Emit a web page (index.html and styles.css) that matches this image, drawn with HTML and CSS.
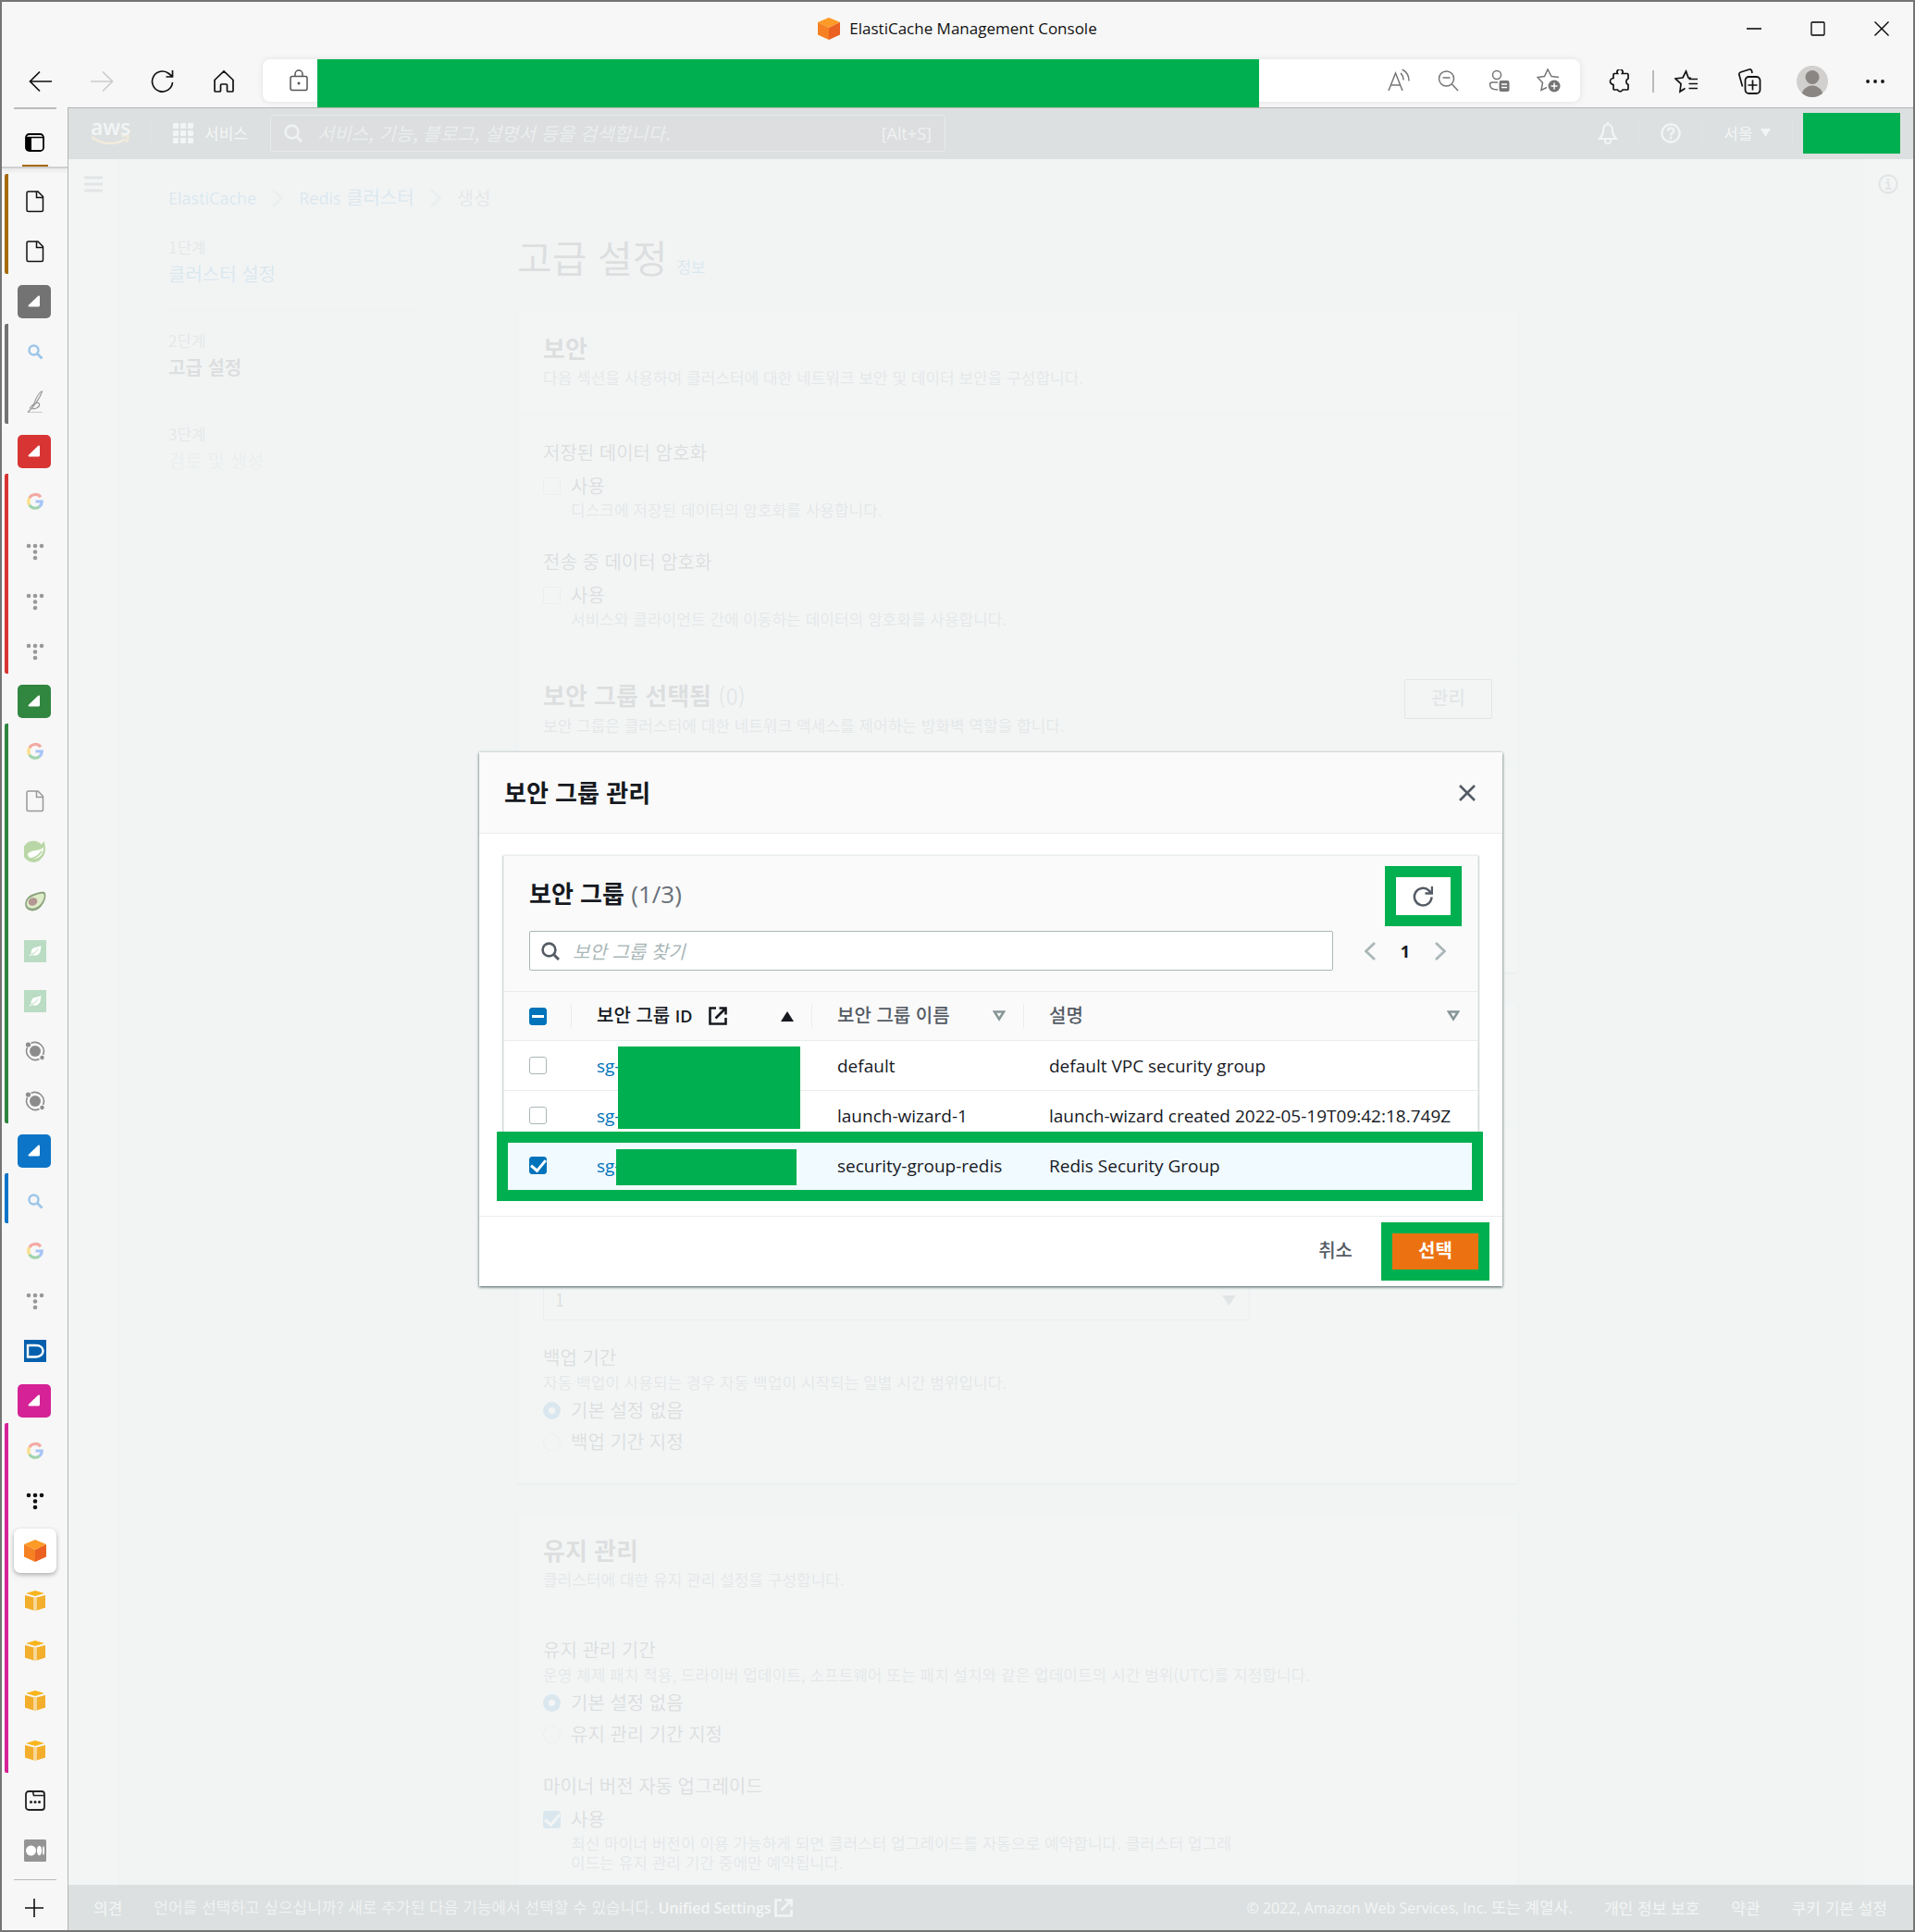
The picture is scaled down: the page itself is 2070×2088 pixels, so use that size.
FILE: index.html
```html
<!DOCTYPE html>
<html lang="ko">
<head>
<meta charset="utf-8">
<title>ElastiCache Management Console</title>
<link rel="stylesheet" href="styles.css">
</head>
<body>
<svg class="sprite" aria-hidden="true">
  <symbol id="i-file" viewBox="0 0 24 24"><path d="M4.500 1h10.500l5.500 5.500v14.500a1.500 1.500 0 0 1-1.500 1.500H4.500A1.500 1.500 0 0 1 3 21V2.500A1.500 1.500 0 0 1 4.500 1zM13.500 1v6.500h7" fill="none" stroke="currentColor" stroke-width="1.500"/></symbol>
  <symbol id="i-group" viewBox="0 0 36 36"><path d="M24 12.500v9.500a1.500 1.500 0 0 1-1.500 1.500H12.500c-1 0-1.300-1-.6-1.700l10.400-10c.8-.7 1.700-.4 1.700.7z" fill="#fff"/></symbol>
  <symbol id="i-find" viewBox="0 0 24 24"><circle cx="10.500" cy="10.500" r="5" fill="none" stroke="#9cc5ea" stroke-width="2.400"/><path d="M14.500 14.500l5 5" stroke="#9cc5ea" stroke-width="2.800"/></symbol>
  <symbol id="i-feather" viewBox="0 0 24 24"><path d="M4 24h15.500M4 23.500C9 19 17 9 19.500 1c-4 0-8.500 12-11 19M6 19.500c3-5 9.500-8 10.500-5s-5 7-8.500 4.500" fill="none" stroke="#999" stroke-width="1.200"/></symbol>
  <symbol id="i-google" viewBox="0 0 24 24"><g fill="none" stroke-width="3.200"><path d="M18 7.300A7.300 7.300 0 0 0 5.800 8.300" stroke="#f3aaa4"/><path d="M5.800 8.300a7.300 7.300 0 0 0 0 7.400" stroke="#fbdf8b"/><path d="M5.800 15.700a7.300 7.300 0 0 0 11 1.800" stroke="#a0d4ae"/><path d="M16.800 17.500a7.300 7.300 0 0 0 2.500-5.500H12.500" stroke="#a6c4f8"/></g></symbol>
  <symbol id="i-tdots" viewBox="0 0 24 24"><g fill="currentColor"><circle cx="5" cy="6" r="2.300"/><circle cx="12" cy="6" r="2.300"/><circle cx="19" cy="6" r="2.300"/><circle cx="12" cy="12.500" r="2.300"/><circle cx="12" cy="19" r="2.300"/></g></symbol>
  <symbol id="i-spring" viewBox="0 0 24 24"><path d="M21.500 1c2 6 2.500 13-2 18a11.500 11.500 0 1 1-1-14.500c1.200-1 2.200-2 3-3.500z" fill="#b9d7a6"/><path d="M4 16c1 4 6 5 10 3.500 5-2 7-7 7-12-3 4-9 3-12.500 4.500C5 13.500 3.500 14.500 4 16z" fill="#fff"/><path d="M5 20c6 0 11-3 14-8" fill="none" stroke="#b9d7a6" stroke-width="1.600"/></symbol>
  <symbol id="i-avocado" viewBox="0 0 24 24"><path d="M3 20C-1 15 2 8 8 5c5-2 11-4 14-3 3 3 1 10-3 15-4 6-12 7-16 3z" fill="#8da37f"/><path d="M4 18c-3-4 0-9 5-11 4-2 10-4 12-3 2 2 0 7-3 11-4 5-11 6-14 3z" fill="#deecc9"/><ellipse cx="9.500" cy="12.500" rx="5" ry="4.200" transform="rotate(-25 9.500 12.500)" fill="#b39792"/></symbol>
  <symbol id="i-leaf" viewBox="0 0 24 24"><path d="M0 0h24v24H0z" fill="#b9dcc2"/><path d="M18.500 6c-3 2-8 1-10 4-1.500 2.500-.5 4-1 5-.5 1-1 1.500-2.500 2 2 .5 3-.5 3.500-1 4 1.500 7 .5 8.500-2.500 1.300-2.600 1-5 1.500-7.500z" fill="#fff"/><path d="M8 15.500c3-1 5.500-3 7.500-6" fill="none" stroke="#b9dcc2"/></symbol>
  <symbol id="i-orbit" viewBox="0 0 24 24"><circle cx="12" cy="12" r="6" fill="#8c8c8c"/><path d="M7.500 3.500a9.600 9.600 0 0 1 13 12.500M16.500 20.500A9.600 9.600 0 0 1 3.500 8" fill="none" stroke="#8c8c8c" stroke-width="1.600"/><circle cx="4.500" cy="5" r="2.600" fill="#8c8c8c"/><circle cx="19.500" cy="19" r="2.200" fill="#8c8c8c"/></symbol>
  <symbol id="i-d" viewBox="0 0 24 24"><path d="M0 0h24v24H0z" fill="#0460ad"/><path d="M4 6h9c5 0 7.500 3 7.500 6s-2.500 6.500-7.500 6.500H4z" fill="none" stroke="#fff" stroke-width="2.400"/></symbol>
  <symbol id="i-cube" viewBox="0 0 24 24"><path d="M12 0l12 5-12 6L0 5z" fill="#fd9a28"/><path d="M0 5l12 6v13L0 18.500z" fill="#f58122"/><path d="M24 5l-12 6v13l12-5.500z" fill="#ea6121"/></symbol>
  <symbol id="i-box" viewBox="0 0 24 24"><path d="M12 1l10 3-10 3L2 4z" fill="#f8b51c"/><path d="M1 6l9.500 2.500v14L1 19.500zM23 6l-9.500 2.500v14l9.500-3z" fill="#f3ae2b"/><path d="M12 8v15" stroke="#f9d998" stroke-width="2"/></symbol>
  <symbol id="i-window" viewBox="0 0 24 24"><rect x="2" y="2" width="20" height="20" rx="3" fill="none" stroke="#222" stroke-width="1.800"/><path d="M9.500 2l1 4.500H22" fill="none" stroke="#222" stroke-width="1.600"/><g fill="#222"><circle cx="7.500" cy="13.500" r="1.500"/><circle cx="12" cy="13.500" r="1.500"/><circle cx="16.500" cy="13.500" r="1.500"/></g></symbol>
  <symbol id="i-medium" viewBox="0 0 24 24"><rect width="24" height="24" rx="1.500" fill="#949494"/><g fill="#fff"><circle cx="7.500" cy="12" r="5.500"/><ellipse cx="16.500" cy="12" rx="2.600" ry="5.300"/><ellipse cx="21" cy="12" rx="1" ry="4.700"/></g></symbol>
  <symbol id="i-search" viewBox="0 0 20 20"><circle cx="8.500" cy="8.500" r="6.900" fill="none" stroke="currentColor" stroke-width="2.600"/><path d="M13 13l6 6" stroke="currentColor" stroke-width="3"/></symbol>
  <symbol id="i-external" viewBox="0 0 20 20"><path d="M8 1.500H1.500v17h17V12M11.500 1.500h7v7M18 2L7.500 12.500" fill="none" stroke="currentColor" stroke-width="2.600"/></symbol>
  <symbol id="i-sort" viewBox="0 0 14 12"><path d="M2 1.500h10L7 9.500z" fill="none" stroke="#879596" stroke-width="2.500"/></symbol>
  <symbol id="i-next" viewBox="0 0 12 20"><path d="M1 1l9.500 9L1 19" fill="none" stroke="currentColor" stroke-width="2.800"/></symbol>
</svg>

<div class="browser">
  <header class="chrome">
    <div class="titlebar">
      <div class="page-title"><svg width="24" height="24"><use href="#i-cube"/></svg><span>ElastiCache Management Console</span></div>
      <div class="window-buttons">
        <button aria-label="최소화"><svg width="16" height="16"><path d="M0 8h16" stroke="#000" stroke-width="1.500"/></svg></button>
        <button aria-label="최대화"><svg width="16" height="16"><rect x="1" y="1" width="14" height="14" rx="1" fill="none" stroke="#000" stroke-width="1.300"/></svg></button>
        <button aria-label="닫기"><svg width="16" height="16"><path d="M.5.5l15 15M15.500.5l-15 15" stroke="#000" stroke-width="1.300"/></svg></button>
      </div>
    </div>
    <div class="toolbar">
      <div class="nav-buttons">
        <button aria-label="뒤로"><svg width="26" height="24" viewBox="0 0 26 24"><path d="M25 12H2M12 1.500L1.500 12 12 22.500" fill="none" stroke="#111" stroke-width="1.700"/></svg></button>
        <button aria-label="앞으로" disabled><svg width="26" height="24" viewBox="0 0 26 24"><path d="M1 12h23M14 1.500L24.500 12 14 22.500" fill="none" stroke="#ccc" stroke-width="1.700"/></svg></button>
        <button aria-label="새로 고침"><svg width="26" height="26" viewBox="0 0 26 26"><path d="M23.500 14A11 11 0 1 1 19.500 4.500L23 7.500M23.500 1v7h-7" fill="none" stroke="#111" stroke-width="1.700"/></svg></button>
        <button aria-label="홈"><svg width="24" height="26" viewBox="0 0 24 26"><path d="M2 11.500L12 2l10 9.500V23a1 1 0 0 1-1 1h-4.500a1 1 0 0 1-1-1v-6a1 1 0 0 0-1-1h-5a1 1 0 0 0-1 1v6a1 1 0 0 1-1 1H3a1 1 0 0 1-1-1z" fill="none" stroke="#111" stroke-width="1.700"/></svg></button>
      </div>
      <div class="address">
        <button class="lock" aria-label="사이트 정보"><svg width="20" height="24" viewBox="0 0 20 24"><rect x="1" y="7.500" width="18" height="15" rx="2" fill="none" stroke="#555" stroke-width="1.500"/><path d="M6 7.500V5a4 4 0 0 1 8 0v2.500" fill="none" stroke="#555" stroke-width="1.500"/><circle cx="10" cy="15" r="1.500" fill="#555"/></svg></button>
        <div class="mask mask-url"></div>
        <div class="address-tools">
          <button aria-label="소리내어 읽기"><svg width="24" height="24" viewBox="0 0 24 24"><path d="M1 23L8.500 4 16 23M3.500 17h10M14 4c2 2 3 4.500 3 7.500M15.500 0C20 2 23 7 23 12.500" fill="none" stroke="#757575" stroke-width="1.500"/></svg></button>
          <button aria-label="축소"><svg width="24" height="24" viewBox="0 0 24 24"><circle cx="9.500" cy="10" r="8" fill="none" stroke="#757575" stroke-width="1.500"/><path d="M5.500 9h8M15.500 16l6.500 7" fill="none" stroke="#757575" stroke-width="1.500"/></svg></button>
          <button aria-label="로그인 정보"><svg width="24" height="24" viewBox="0 0 24 24"><circle cx="10" cy="6" r="4.500" fill="none" stroke="#757575" stroke-width="1.500"/><path d="M11 14H5a2.500 2.500 0 0 0-2.500 2.500C2.500 20 6 22 11 22" fill="none" stroke="#757575" stroke-width="1.500"/><rect x="12.500" y="12" width="11" height="12" rx="2" fill="#757575"/><path d="M15 16h6M15 19.500h6" stroke="#fff" stroke-width="1.300"/></svg></button>
          <button aria-label="즐겨찾기에 추가"><svg width="26" height="26" viewBox="0 0 26 26"><path d="M24 9.500l-8-1L12 1 8.500 8.500 1 9.500l5.500 6L5 23.500l6-3" fill="none" stroke="#757575" stroke-width="1.500"/><circle cx="19" cy="19" r="6.500" fill="#757575"/><path d="M19 15.500v7M15.500 19h7" stroke="#fff" stroke-width="1.500"/></svg></button>
        </div>
      </div>
      <div class="browser-tools">
        <button aria-label="확장"><svg width="24" height="26" viewBox="0 0 24 26"><path d="M6 4.500h3.500a3 3 0 1 1 5 0H20a1 1 0 0 1 1 1V10a3.500 3.500 0 0 0 0 6.500V21a1 1 0 0 1-1 1h-5a3 3 0 0 1-5.500 0H6a1 1 0 0 1-1-1v-4.500a3.500 3.500 0 0 1 0-7v-4a1 1 0 0 1 1-1z" fill="none" stroke="#111" stroke-width="1.700"/></svg></button>
        <span class="tool-rule"></span>
        <button aria-label="즐겨찾기"><svg width="26" height="26" viewBox="0 0 26 26"><path d="M18 9.500l-3-.5L12.500 2 9 9l-8 1 6 5.500L6 24l5.500-3.500M15.500 10.500H25M15.500 15.500H25M15.500 20.500H25" fill="none" stroke="#111" stroke-width="1.700"/></svg></button>
        <button aria-label="컬렉션" class="spaced"><svg width="26" height="28" viewBox="0 0 26 28"><path d="M5.500 19.500L2 7a2.500 2.500 0 0 1 1.500-3L13 1a2 2 0 0 1 2.500 1.500L16 5" fill="none" stroke="#111" stroke-width="1.700"/><rect x="8.500" y="9" width="16" height="18" rx="4" fill="none" stroke="#111" stroke-width="1.800"/><path d="M16.500 12.500v11M11.500 18h10" stroke="#111" stroke-width="1.700"/></svg></button>
        <button aria-label="프로필" class="spaced"><svg width="34" height="34" viewBox="0 0 34 34"><clipPath id="round"><circle cx="17" cy="17" r="17"/></clipPath><g clip-path="url(#round)"><path d="M0 0h34v34H0z" fill="#d2d0ce"/><circle cx="17" cy="12.500" r="7.500" fill="#8a8684"/><circle cx="17" cy="33" r="11.500" fill="#8a8684"/></g></svg></button>
        <button aria-label="설정 및 기타" class="spaced"><svg width="20" height="6"><g fill="#111"><circle cx="2" cy="3" r="1.900"/><circle cx="10" cy="3" r="1.900"/><circle cx="18" cy="3" r="1.900"/></g></svg></button>
      </div>
    </div>
  </header>

  <div class="window-body">
    <nav class="tabs" aria-label="세로 탭">
      <div class="tabs-top"><button aria-label="탭 창"><svg width="22" height="22" viewBox="0 0 22 22"><rect x="1" y="2" width="19" height="18" rx="3.500" fill="none" stroke="#000" stroke-width="1.800"/><path d="M1 5.500h19" stroke="#000" stroke-width="1.500"/><path d="M1 6h6v14H3a2 2 0 0 1-2-2z"/></svg></button></div>
      <div class="tab-group g-brown"><button class="tab dark"><svg><use href="#i-file"/></svg></button><button class="tab dark"><svg><use href="#i-file"/></svg></button></div>
      <button class="tab group-head g-gray"><svg><use href="#i-group"/></svg></button>
      <div class="tab-group g-gray"><button class="tab"><svg><use href="#i-find"/></svg></button><button class="tab"><svg><use href="#i-feather"/></svg></button></div>
      <button class="tab group-head g-red"><svg><use href="#i-group"/></svg></button>
      <div class="tab-group g-red"><button class="tab"><svg><use href="#i-google"/></svg></button><button class="tab"><svg><use href="#i-tdots"/></svg></button><button class="tab"><svg><use href="#i-tdots"/></svg></button><button class="tab"><svg><use href="#i-tdots"/></svg></button></div>
      <button class="tab group-head g-green"><svg><use href="#i-group"/></svg></button>
      <div class="tab-group g-green"><button class="tab"><svg><use href="#i-google"/></svg></button><button class="tab"><svg><use href="#i-file"/></svg></button><button class="tab"><svg><use href="#i-spring"/></svg></button><button class="tab"><svg><use href="#i-avocado"/></svg></button><button class="tab"><svg><use href="#i-leaf"/></svg></button><button class="tab"><svg><use href="#i-leaf"/></svg></button><button class="tab"><svg><use href="#i-orbit"/></svg></button><button class="tab"><svg><use href="#i-orbit"/></svg></button></div>
      <button class="tab group-head g-blue"><svg><use href="#i-group"/></svg></button>
      <div class="tab-group g-blue"><button class="tab"><svg><use href="#i-find"/></svg></button></div>
      <button class="tab"><svg><use href="#i-google"/></svg></button>
      <button class="tab"><svg><use href="#i-tdots"/></svg></button>
      <button class="tab"><svg><use href="#i-d"/></svg></button>
      <button class="tab group-head g-pink"><svg><use href="#i-group"/></svg></button>
      <div class="tab-group g-pink"><button class="tab"><svg><use href="#i-google"/></svg></button><button class="tab dark"><svg><use href="#i-tdots"/></svg></button><button class="tab current"><span><svg><use href="#i-cube"/></svg></span></button><button class="tab"><svg><use href="#i-box"/></svg></button><button class="tab"><svg><use href="#i-box"/></svg></button><button class="tab"><svg><use href="#i-box"/></svg></button><button class="tab"><svg><use href="#i-box"/></svg></button></div>
      <button class="tab"><svg><use href="#i-window"/></svg></button>
      <button class="tab"><svg><use href="#i-medium"/></svg></button>
      <div class="new-tab"><button aria-label="새 탭"><svg width="22" height="22"><path d="M11 1v20M1 11h20" stroke="#111" stroke-width="1.600"/></svg></button></div>
    </nav>

    <div class="console">
      <header class="aws-header">
        <a class="aws-logo" href="#"><span>aws</span><svg width="42" height="12" viewBox="0 0 42 12"><path d="M1 2c12 9 26 9 37 2" fill="none" stroke="#f90" stroke-width="2.600"/><path d="M33 1.500c3-1 6-1 7.500-.5.300 2-.7 5-2.500 7" fill="none" stroke="#f90" stroke-width="2"/></svg></a>
        <button class="services"><svg width="22" height="22" viewBox="0 0 22 22"><g fill="#fff"><rect width="6" height="6" rx="1"/><rect x="8" width="6" height="6" rx="1"/><rect x="16" width="6" height="6" rx="1"/><rect y="8" width="6" height="6" rx="1"/><rect x="8" y="8" width="6" height="6" rx="1"/><rect x="16" y="8" width="6" height="6" rx="1"/><rect y="16" width="6" height="6" rx="1"/><rect x="8" y="16" width="6" height="6" rx="1"/><rect x="16" y="16" width="6" height="6" rx="1"/></g></svg>서비스</button>
        <div class="aws-search"><svg width="20" height="20"><use href="#i-search"/></svg><input type="text" aria-label="검색" placeholder="서비스, 기능, 블로그, 설명서 등을 검색합니다."><span class="latin">[Alt+S]</span></div>
        <div class="aws-tools">
          <button class="bell" aria-label="알림"><svg width="22" height="24" viewBox="0 0 22 24"><path d="M11 2.500c-4 0-5 3.500-5 7 0 4-2 6-4 8.500h18c-2-2.500-4-4.500-4-8.500 0-3.500-1-7-5-7zM11 0v3" fill="none" stroke="#fff" stroke-width="2.200"/><path d="M8 19v1.500a3 3 0 0 0 6 0V19" fill="none" stroke="#fff" stroke-width="2"/></svg></button>
          <button class="help" aria-label="도움말"><svg width="22" height="22" viewBox="0 0 22 22"><circle cx="11" cy="11" r="9.600" fill="none" stroke="#fff" stroke-width="2.200"/><path d="M7.800 8.500c0-4 6.500-4 6.500-.3 0 2.300-3.200 2.300-3.200 5" fill="none" stroke="#fff" stroke-width="2.200"/><circle cx="11.100" cy="16" r="1.400" fill="#fff"/></svg></button>
          <button class="region">서울<svg width="11" height="9"><path d="M0 0h11L5.500 9z" fill="#fff"/></svg></button>
          <div class="mask mask-account"></div>
        </div>
      </header>

      <div class="console-body">
        <div class="rail"><button aria-label="메뉴"><svg width="20" height="18"><path d="M0 2h20M0 9h20M0 16h20" stroke="#545b64" stroke-width="2.800"/></svg></button></div>
        <main>
          <nav class="breadcrumb" aria-label="이동 경로">
            <a href="#" class="latin">ElastiCache</a><svg width="12" height="20"><use href="#i-next"/></svg><a href="#"><span class="latin">Redis</span> 클러스터</a><svg width="12" height="20"><use href="#i-next"/></svg><span class="here">생성</span>
          </nav>
          <div class="wizard">
            <ol class="steps">
              <li><small>1단계</small><a href="#">클러스터 설정</a></li>
              <li><small>2단계</small><strong>고급 설정</strong></li>
              <li><small>3단계</small><span class="off">검토 및 생성</span></li>
            </ol>
            <div class="form">
              <div class="form-title"><h1>고급 설정</h1><a href="#">정보</a></div>
              <section class="card">
                <div class="card-head"><div><h2>보안</h2><p>다음 섹션을 사용하여 클러스터에 대한 네트워크 보안 및 데이터 보안을 구성합니다.</p></div></div>
                <div class="card-body roomy">
                  <fieldset><legend>저장된 데이터 암호화</legend><label class="choice"><input type="checkbox">사용</label><p class="inset">디스크에 저장된 데이터의 암호화를 사용합니다.</p></fieldset>
                  <fieldset><legend>전송 중 데이터 암호화</legend><label class="choice"><input type="checkbox">사용</label><p class="inset">서비스와 클라이언트 간에 이동하는 데이터의 암호화를 사용합니다.</p></fieldset>
                </div>
                <div class="card-head line"><div><h2>보안 그룹 선택됨 <span class="count">(0)</span></h2><p>보안 그룹은 클러스터에 대한 네트워크 액세스를 제어하는 방화벽 역할을 합니다.</p></div><button class="plain">관리</button></div>
                <div class="group-list"></div>
              </section>
              <section class="card">
                <div class="card-head backup-head"></div>
                <div class="card-body backup">
                  <div class="select"><select aria-label="보존 기간"><option>1</option></select><svg width="15" height="11"><path d="M0 0h15l-7.500 11z" fill="#545b64"/></svg></div>
                  <fieldset><legend>백업 기간</legend><p>자동 백업이 사용되는 경우 자동 백업이 시작되는 일별 시간 범위입니다.</p><label class="choice"><input type="radio" name="backup" checked>기본 설정 없음</label><label class="choice"><input type="radio" name="backup">백업 기간 지정</label></fieldset>
                </div>
              </section>
              <section class="card">
                <div class="card-head"><div><h2>유지 관리</h2><p>클러스터에 대한 유지 관리 설정을 구성합니다.</p></div></div>
                <div class="card-body">
                  <fieldset><legend>유지 관리 기간</legend><p>운영 체제 패치 적용, 드라이버 업데이트, 소프트웨어 또는 패치 설치와 같은 업데이트의 시간 범위(UTC)를 지정합니다.</p><label class="choice"><input type="radio" name="maint" checked>기본 설정 없음</label><label class="choice"><input type="radio" name="maint">유지 관리 기간 지정</label></fieldset>
                  <fieldset><legend>마이너 버전 자동 업그레이드</legend><label class="choice"><input type="checkbox" checked>사용</label><p class="inset">최신 마이너 버전이 이용 가능하게 되면 클러스터 업그레이드를 자동으로 예약합니다. 클러스터 업그레이드는 유지 관리 기간 중에만 예약됩니다.</p></fieldset>
                </div>
              </section>
            </div>
          </div>
        </main>
        <div class="rail right"><button aria-label="정보"><svg width="22" height="22" viewBox="0 0 22 22"><circle cx="11" cy="11" r="9.600" fill="none" stroke="#545b64" stroke-width="2.200"/><path d="M8.500 9.500h3V16M8 16h6.500" fill="none" stroke="#545b64" stroke-width="2.400"/><circle cx="11" cy="6" r="1.600" fill="#545b64"/></svg></button></div>
      </div>

      <footer class="aws-footer">
        <a href="#" class="feedback">의견</a>
        <p>언어를 선택하고 싶으십니까? 새로 추가된 다음 기능에서 선택할 수 있습니다. <a href="#" class="latin">Unified Settings<svg width="20" height="20"><use href="#i-external"/></svg></a></p>
        <span class="legal"><span class="latin">© 2022, Amazon Web Services, Inc.</span> 또는 계열사.</span>
        <a href="#">개인 정보 보호</a><a href="#">약관</a><a href="#">쿠키 기본 설정</a>
      </footer>

      <div class="overlay">
        <div class="modal" role="dialog" aria-labelledby="modal-title">
          <div class="modal-head"><h2 id="modal-title">보안 그룹 관리</h2><button aria-label="닫기"><svg width="18" height="18"><path d="M1 1l16 16M17 1L1 17" stroke="#545b64" stroke-width="2.600"/></svg></button></div>
          <div class="modal-body">
            <div class="picker">
              <div class="picker-head">
                <div class="picker-title"><h2>보안 그룹 <span class="count latin">(1/3)</span></h2><button class="refresh marked" aria-label="새로 고침"><svg width="22" height="22" viewBox="0 0 22 22"><path d="M20.500 11.500a9.300 9.300 0 1 1-3-7.200L20 7M21 0v7.500h-7.500" fill="none" stroke="#545b64" stroke-width="2.500"/></svg></button></div>
                <div class="picker-tools">
                  <div class="filter"><svg width="20" height="20"><use href="#i-search"/></svg><input type="text" aria-label="보안 그룹 찾기" placeholder="보안 그룹 찾기"></div>
                  <div class="pager"><button class="prev" aria-label="이전"><svg width="12" height="20"><use href="#i-next"/></svg></button><b class="latin">1</b><button aria-label="다음"><svg width="12" height="20"><use href="#i-next"/></svg></button></div>
                </div>
              </div>
              <table>
                <colgroup><col class="c-check"><col class="c-id"><col class="c-name"><col></colgroup>
                <thead><tr>
                  <th><input type="checkbox" class="partial" aria-label="모두 선택"></th>
                  <th><div class="th sorted"><span>보안 그룹 <b class="latin">ID</b></span><svg class="ext" width="20" height="20"><use href="#i-external"/></svg><svg class="order" width="14" height="11"><path d="M0 11h14L7 0z" fill="#16191f"/></svg></div></th>
                  <th><div class="th"><span>보안 그룹 이름</span><svg class="order" width="14" height="12"><use href="#i-sort"/></svg></div></th>
                  <th><div class="th"><span>설명</span><svg class="order" width="14" height="12"><use href="#i-sort"/></svg></div></th>
                </tr></thead>
                <tbody class="latin">
                  <tr><td><input type="checkbox" aria-label="default"></td><td><a href="#">sg-</a><span class="mask mask-two"></span></td><td>default</td><td>default VPC security group</td></tr>
                  <tr><td><input type="checkbox" aria-label="launch-wizard-1"></td><td><a href="#">sg-</a></td><td>launch-wizard-1</td><td>launch-wizard created 2022-05-19T09:42:18.749Z</td></tr>
                  <tr class="picked"><td><input type="checkbox" checked aria-label="security-group-redis"></td><td><a href="#">sg-</a><span class="mask mask-one"></span></td><td>security-group-redis</td><td>Redis Security Group</td></tr>
                </tbody>
              </table>
              <div class="row-frame"></div>
            </div>
          </div>
          <div class="modal-foot"><button class="cancel">취소</button><button class="primary marked">선택</button></div>
        </div>
      </div>
    </div>
  </div>
</div>
</body>
</html>
```

FILE: styles.css
```css
* { box-sizing: border-box; }
body { margin: 0; font: 20px/30px "Noto Sans CJK KR", sans-serif; color: #16191f; }
h1, h2, p, ol, fieldset { margin: 0; padding: 0; border: 0; min-width: 0; }
button { font: inherit; color: inherit; background: none; border: 0; padding: 0; display: flex; align-items: center; justify-content: center; }
input, select { font: inherit; color: inherit; margin: 0; }
a { color: #0073bb; text-decoration: none; }
svg { display: block; flex: none; }
.sprite { display: none; }
.latin { font-family: "Open Sans", "Noto Sans CJK KR", sans-serif; }
.mask { background: #00b050; flex: none; }

/* browser window */
.browser { height: 100vh; border: 2px solid #757575; display: flex; flex-direction: column; background: #f7f7f7; overflow: hidden; }
.chrome { flex: none; }
.titlebar { height: 57px; display: grid; grid-template-columns: 1fr auto 1fr; align-items: center; }
.page-title { grid-column: 2; display: flex; align-items: center; gap: 10px; font: 17px/24px "Open Sans", sans-serif; color: #111; }
.window-buttons { display: flex; justify-content: flex-end; }
.window-buttons button { width: 69px; height: 56px; }
.toolbar { height: 57px; display: flex; align-items: center; padding: 0 14px 0 9px; }
.nav-buttons { display: flex; width: 273px; }
.nav-buttons button { width: 66px; }
.address { flex: 1; height: 46px; margin-bottom: 1px; display: flex; align-items: center; background: #fff; border-radius: 8px; box-shadow: 0 0 6px rgba(0,0,0,.1); }
.lock { width: 59px; padding-left: 18px; }
.mask-url { flex: 1; height: 52px; margin-top: 6px; max-width: 1018px; }
.address-tools { display: flex; margin-left: auto; padding-right: 7px; }
.address-tools button { width: 54px; }
.browser-tools { display: flex; align-items: center; margin-left: 16px; }
.browser-tools button { width: 54px; }
.browser-tools .spaced { margin-left: 14px; }
.tool-rule { width: 2px; height: 24px; margin: 0 8px; background: #bbb; }
.window-body { flex: 1; display: flex; min-height: 0; }

/* vertical tabs */
.tabs { width: 71px; flex: none; display: flex; flex-direction: column; }
.tabs > * { flex: none; }
.tabs-top { height: 66px; margin-bottom: 6px; border-bottom: 2px solid #d0d0d0; box-shadow: 0 3px 4px rgba(0,0,0,.06); display: flex; flex-direction: column; align-items: center; }
.tabs-top::before { content: ""; width: 46px; height: 2px; background: #bbb; }
.tabs-top::after { content: ""; width: 28px; height: 2px; margin-top: auto; background: #a66a08; }
.tabs-top button { margin-top: 25px; }
.tab { width: 100%; height: 54px; padding-top: 6px; color: #999; }
.tab svg { width: 24px; height: 24px; }
.tab.dark { color: #111; }
.tab-group { margin-left: 3px; padding-right: 7px; border-left: 4px solid; border-radius: 2px; }
.group-head { padding-right: 2px; }
.group-head svg { width: 36px; height: 36px; border-radius: 5px; background: currentColor; }
.g-brown { color: #a66a08; }
.g-gray { color: #737373; }
.g-red { color: #d83434; }
.g-green { color: #318640; }
.g-blue { color: #0c75c8; }
.g-pink { color: #d52297; }
.current span { width: 46px; height: 48px; border-radius: 7px; background: #fff; box-shadow: 0 2px 5px rgba(0,0,0,.3); display: flex; align-items: center; justify-content: center; }
.new-tab { width: 46px; height: 55px; margin: 7px auto 0; padding: 6px 2px 0 0; border-top: 1px solid #bbb; display: flex; align-items: center; justify-content: center; }

/* console shell */
.console { flex: 1; min-width: 0; position: relative; display: flex; flex-direction: column; border: solid #b5b5b5; border-width: 1px 0 0 1px; background: #f2f4f4; }
.aws-header { flex: none; height: 55px; padding: 0 14px 2px 24px; display: flex; align-items: center; background: #142830; color: #fff; font-size: 17px; }
.aws-logo { width: 66px; height: 30px; margin-right: 23px; border-right: 1px solid #3b4655; color: #fff; font: 600 23px/17px "Open Sans", sans-serif; }
.services { gap: 12px; margin-right: 24px; }
.aws-search { flex: 0 1 730px; height: 40px; padding: 0 14px; display: flex; align-items: center; gap: 14px; background: #16191f; border: 1px solid #879596; border-radius: 3px; color: #d5dbdb; font-size: 18px; }
.aws-search input { flex: 1; min-width: 0; border: 0; background: none; font-size: 20px; }
.aws-search input::placeholder { color: #aab7b8; font-style: italic; }
.aws-tools { display: flex; align-items: center; margin-left: auto; }
.aws-tools button { height: 30px; border-right: 1px solid #3b4655; }
.bell, .help { width: 68px; }
.region { width: 98px; gap: 8px; }
.mask-account { position: relative; z-index: 2; width: 105px; height: 44px; margin-left: 11px; }
.console-body { flex: 1; min-height: 0; display: flex; overflow: hidden; }
.rail { flex: none; width: 55px; padding-top: 18px; background: #fff; border-right: 1px solid #d5dbdb; display: flex; flex-direction: column; align-items: center; }
.rail.right { padding-top: 16px; border: 0; border-left: 1px solid #d5dbdb; }
main { flex: 1; min-width: 0; padding: 26px 53px 0; }
.breadcrumb { display: flex; align-items: center; gap: 17px; font-size: 20px; color: #aab7b8; }
.breadcrumb .latin { font-size: 18px; }
.here { color: #687078; }
.wizard { display: grid; grid-template-columns: 270px minmax(0, 1082px); gap: 107px; padding-top: 7px; }
.steps { list-style: none; }
.steps li { padding: 20px 0 25px; border-bottom: 1px solid #d5dbdb; display: flex; flex-direction: column; }
.steps li:last-child { border: 0; }
.steps small { font-size: 17px; line-height: 22px; margin-bottom: 3px; color: #687078; }
.off { color: #aab7b8; }
.form-title { display: flex; align-items: baseline; gap: 10px; padding-top: 18px; margin-bottom: 33px; font-size: 17px; }
h1 { font-size: 41px; line-height: 46px; font-weight: 400; }

.card { margin-bottom: 32px; background: #fff; border: 1px solid #eaeded; box-shadow: 0 1px 2px rgba(0,28,36,.4); }
.card-head { min-height: 112px; padding: 22px 27px 0; display: flex; justify-content: space-between; background: #fafafa; border-bottom: 1px solid #eaeded; }
.card-head.line { border-top: 1px solid #eaeded; }
h2 { font-size: 26px; line-height: 34px; font-weight: 700; }
.count { font-weight: 400; font-size: 24px; color: #687078; }
.card p { font-size: 17px; line-height: 21px; color: #687078; }
.card h2 + p { margin-top: 4px; }
.plain { width: 95px; height: 43px; padding-bottom: 3px; border: 1px solid #545b64; border-radius: 2px; background: #fff; color: #545b64; font-weight: 500; }
.group-list { height: 227px; }
.backup-head { min-height: 132px; }
.card-body { display: flex; flex-direction: column; gap: 28px; padding: 21px 27px 30px; }
.card-body.roomy { gap: 32px; padding: 26px 27px 32px; }
.card-body.backup { gap: 26px; padding-top: 168px; }
legend { padding: 0; line-height: 28px; margin-bottom: 2px; }
.choice { display: flex; align-items: center; gap: 11px; height: 28px; margin-top: 6px; }
.card .inset { margin: 1px 0 0 30px; max-width: 724px; }
.select { position: relative; width: 764px; height: 43px; }
.select select { width: 100%; height: 100%; padding: 0 12px 4px; appearance: none; background: #fff; border: 1px solid #aab7b8; border-radius: 2px; font-size: 18px; }
.select svg { position: absolute; right: 15px; top: 16px; }

input[type="checkbox"], input[type="radio"] { appearance: none; flex: none; display: grid; place-items: center; width: 19px; height: 19px; border: 1px solid #aab7b8; border-radius: 3px; background: #fff; }
input[type="checkbox"]:checked, .partial[type="checkbox"] { background: #0073bb; border-color: #0073bb; }
input[type="checkbox"]:checked::after { content: ""; width: 7px; height: 13px; margin-top: -3px; border: solid #fff; border-width: 0 3px 3px 0; transform: rotate(40deg); }
.partial::after { content: ""; width: 13px; height: 3px; background: #fff; }
input[type="radio"] { border-radius: 50%; }
input[type="radio"]:checked { border: 6px solid #0073bb; }

.aws-footer { flex: none; height: 49px; padding: 0 28px 0 27px; display: flex; align-items: center; gap: 34px; background: #142830; color: #d5dbdb; font-size: 17px; }
.aws-footer a { color: #fff; }
.aws-footer p a { display: inline-flex; align-items: center; gap: 3px; font-size: 16px; font-weight: 600; }
.legal { margin-left: auto; color: #fff; }
.legal .latin { font-size: 16px; }

/* dialog */
.overlay { position: absolute; inset: 0; z-index: 1; display: flex; align-items: center; justify-content: center; background: rgba(242,244,244,.9); }
.modal { width: 1106px; background: #fff; box-shadow: 0 1px 3px #3d5656; }
.modal-head { height: 88px; padding: 0 29px 0 27px; display: flex; align-items: center; justify-content: space-between; background: #fafafa; border-bottom: 1px solid #eaeded; }
.modal-head h2 { padding-bottom: 2px; }
.modal-body { padding: 23px 26px 27px; }
.picker { position: relative; border: 1px solid #eaeded; border-bottom: 0; box-shadow: 0 1px 2px rgba(0,28,36,.5); }
.picker-head { padding: 23px 29px 22px 27px; background: #fafafa; }
.picker-title { display: flex; justify-content: space-between; height: 41px; margin-bottom: 17px; }
.picker-title .count { font-size: 26px; line-height: 30px; }
.refresh { width: 59px; height: 41px; padding-right: 2px; background: #fff; }
.marked { outline: 12px solid #00b050; }
.picker-tools { display: flex; justify-content: space-between; gap: 30px; }
.filter { flex: 1; height: 43px; padding: 0 12px; display: flex; align-items: center; gap: 12px; background: #fff; border: 1px solid #aab7b8; border-radius: 2px; color: #545b64; }
.filter input { flex: 1; min-width: 0; border: 0; background: none; }
.filter input::placeholder { color: #aab7b8; font-style: italic; }
.pager { display: flex; align-items: center; gap: 27px; padding: 0 5px 0 4px; color: #aab7b8; }
.pager b { color: #16191f; font-size: 18px; }
.prev svg { transform: scaleX(-1); }
table { width: 100%; table-layout: fixed; border-collapse: collapse; }
.c-check { width: 72px; }
.c-id { width: 260px; }
.c-name { width: 229px; }
th { height: 53px; padding: 0; text-align: left; font-weight: 500; background: #fafafa; border: solid #eaeded; border-width: 1px 0; color: #545b64; }
th input, td input { margin-left: 27px; }
.th { height: 26px; padding: 0 19px 0 27px; border-left: 1px solid #eaeded; display: flex; align-items: center; gap: 17px; }
.th span { padding-bottom: 2px; }
.sorted { color: #16191f; }
.sorted .latin { font-weight: 600; font-size: 18px; }
.order { margin-left: auto; }
td { position: relative; height: 54px; padding: 0 0 0 28px; font-size: 19px; border-bottom: 1px solid #eaeded; white-space: nowrap; }
td:first-child { padding: 0; }
.picked td { background: #f1faff; }
.mask-two, .mask-one { position: absolute; z-index: 1; }
.mask-two { left: 51px; top: 6px; width: 197px; height: 89px; }
.mask-one { left: 49px; top: 9px; width: 195px; height: 39px; }
.row-frame { position: absolute; left: -8px; right: -6px; bottom: -11px; height: 75px; border: 12px solid #00b050; pointer-events: none; }
.modal-foot { height: 76px; padding: 0 26px; display: flex; align-items: center; justify-content: flex-end; gap: 43px; border-top: 1px solid #eaeded; font-weight: 700; }
.modal-foot button { height: 39px; padding-bottom: 3px; }
.cancel { color: #545b64; font-weight: 500; }
.primary { width: 93px; background: #ec7211; color: #fff; }
```
